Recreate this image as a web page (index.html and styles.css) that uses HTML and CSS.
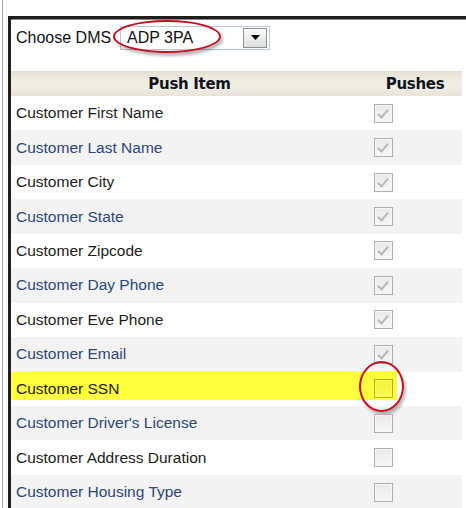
FILE: index.html
```
<!DOCTYPE html>
<html>
<head>
<meta charset="utf-8">
<link rel="stylesheet" href="styles.css">
</head>
<body>
<div class="outer">
  <div class="frame">
    <div class="dms">
      <span class="dms-label">Choose DMS</span>
      <div class="select">
        <span class="select-text">ADP 3PA</span>
        <span class="select-btn"><svg width="9" height="5" viewBox="0 0 9 5"><path d="M0 0H9L4.5 5Z" fill="#000"/></svg></span>
      </div>
      <div class="ring ring-select"></div>
    </div>
    <div class="table">
      <div class="head">
        <div class="hcell">Push Item</div>
        <div class="hcell">Pushes</div>
      </div>
      <div class="row"><div class="name">Customer First Name</div><div class="cell"><span class="cb on"></span></div></div>
      <div class="row alt"><div class="name">Customer Last Name</div><div class="cell"><span class="cb on"></span></div></div>
      <div class="row"><div class="name">Customer City</div><div class="cell"><span class="cb on"></span></div></div>
      <div class="row alt"><div class="name">Customer State</div><div class="cell"><span class="cb on"></span></div></div>
      <div class="row"><div class="name">Customer Zipcode</div><div class="cell"><span class="cb on"></span></div></div>
      <div class="row alt"><div class="name">Customer Day Phone</div><div class="cell"><span class="cb on"></span></div></div>
      <div class="row"><div class="name">Customer Eve Phone</div><div class="cell"><span class="cb on"></span></div></div>
      <div class="row alt"><div class="name">Customer Email</div><div class="cell"><span class="cb on"></span></div></div>
      <div class="row hl"><div class="name">Customer SSN</div><div class="cell"><span class="cb yel"></span><div class="ring ring-cb"></div></div></div>
      <div class="row alt"><div class="name">Customer Driver's License</div><div class="cell"><span class="cb"></span></div></div>
      <div class="row"><div class="name">Customer Address Duration</div><div class="cell"><span class="cb"></span></div></div>
      <div class="row alt"><div class="name">Customer Housing Type</div><div class="cell"><span class="cb"></span></div></div>
    </div>
  </div>
</div>
</body>
</html>
```
FILE: styles.css
```
html, body {
  margin: 0;
  padding: 0;
  background: #fff;
  overflow: hidden;
}
body {
  padding-left: 2px;
  font-family: "Liberation Sans", Arial, sans-serif;
}
.outer {
  border-left: 1px solid #a9a9a9;
  padding-left: 5px;
  padding-top: 16px;
  height: 492px;
}
.frame {
  border-left: 3px solid #1e1e1e;
  border-top: 3px solid #1e1e1e;
  box-shadow: inset 0 1px 0 #8a8a8a;
  height: 100%;
}
.dms {
  position: relative;
  display: flex;
  align-items: center;
  padding: 6px 5px 0 5px;
  height: 25px;
}
.dms-label {
  font-size: 16px;
  color: #111;
  width: 104px;
}
.select {
  display: flex;
  align-items: center;
  justify-content: space-between;
  width: 150px;
  height: 24px;
  border: 1px solid #b7c6d8;
  padding: 0 2px 0 6px;
  box-sizing: border-box;
}
.select-text {
  font-size: 16px;
  color: #111;
}
.select-btn {
  display: flex;
  align-items: center;
  justify-content: center;
  width: 24px;
  height: 20px;
  box-sizing: border-box;
  border: 1px solid #8f8f8f;
  background: linear-gradient(#fbfbfb, #dcdcdc);
}
.ring {
  position: absolute;
  border: 2px solid #c41020;
  border-radius: 50%;
  box-shadow: 2px 3px 3px rgba(0,0,0,0.28);
  box-sizing: border-box;
}
.ring-select {
  left: 102px;
  top: 1px;
  width: 108px;
  height: 33px;
}
.table {
  margin-top: 21px;
  margin-right: 4px;
}
.head {
  display: grid;
  grid-template-columns: 357px 1fr;
  height: 25px;
  align-items: center;
  background: linear-gradient(#e4e0d2 0%, #eeebe2 35%, #f1eee6 60%, #e7e3d7 100%);
}
.hcell {
  text-align: center;
  font-family: "DejaVu Sans", sans-serif;
  font-weight: bold;
  font-size: 15px;
  letter-spacing: -0.3px;
  color: #0e1420;
}
.row {
  display: grid;
  grid-template-columns: 357px 1fr;
  height: 34.45px;
  align-items: center;
  background: #fff;
}
.row.alt {
  background: #f3f3f3;
}
.row.alt .name {
  color: #2c4878;
}
.row.hl {
  background: linear-gradient(#ffff3e, #ffff3e) no-repeat 0 0 / 386px 28px, #fff;
}
.name {
  padding-left: 5px;
  font-size: 15.5px;
  color: #1c1c1c;
  white-space: nowrap;
}
.cell {
  position: relative;
  display: flex;
  align-items: center;
  padding-left: 6px;
}
.cb {
  position: relative;
  width: 19px;
  height: 19px;
  box-sizing: border-box;
  border: 1px solid #aab0b3;
  background: linear-gradient(#e9e9e9, #f7f7f7);
  box-shadow: inset 0 0 0 1px #f6f6f6;
}
.cb.on::after {
  content: "";
  position: absolute;
  left: 5px;
  top: 2px;
  width: 4px;
  height: 9px;
  border-right: 2px solid #b8b8b8;
  border-bottom: 2px solid #b8b8b8;
  transform: rotate(40deg);
}
.cb.yel {
  border-color: #b4b400;
  background: linear-gradient(#f2f23a, #f8f850);
  box-shadow: inset 0 0 0 1px #f8f870;
}
.ring-cb {
  left: -9px;
  top: -18px;
  width: 45px;
  height: 51px;
}
```
